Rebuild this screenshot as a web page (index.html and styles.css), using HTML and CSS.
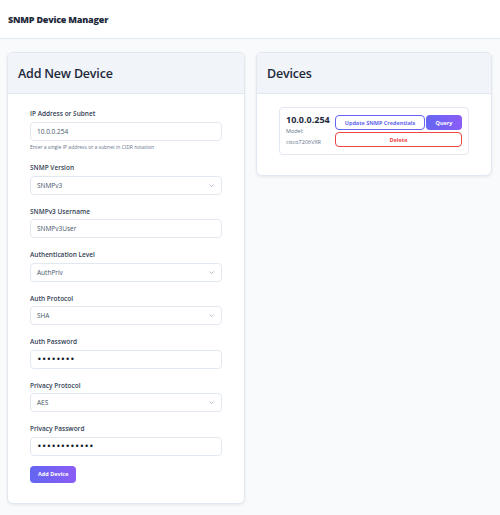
FILE: index.html
```html
<!DOCTYPE html>
<html lang="en">
<head>
<meta charset="utf-8">
<title>SNMP Device Manager</title>
<link rel="stylesheet" href="styles.css">
</head>
<body>
<header class="topbar">
  <h1 class="brand">SNMP Device Manager</h1>
</header>
<main class="layout">
  <section class="card">
    <div class="card-head"><h2 class="card-title">Add New Device</h2></div>
    <form class="card-body form">
      <div class="group">
        <label class="label">IP Address or Subnet</label>
        <input class="field" type="text" value="10.0.0.254">
        <div class="help">Enter a single IP address or a subnet in CIDR notation</div>
      </div>
      <div class="group">
        <label class="label">SNMP Version</label>
        <div class="field select"><span>SNMPv3</span><svg class="chev" viewBox="0 0 10 6" width="5" height="3"><path d="M1 1l4 4 4-4" fill="none" stroke="#94a3b8" stroke-width="1.4"/></svg></div>
      </div>
      <div class="group">
        <label class="label">SNMPv3 Username</label>
        <input class="field" type="text" value="SNMPv3User">
      </div>
      <div class="group">
        <label class="label">Authentication Level</label>
        <div class="field select"><span>AuthPriv</span><svg class="chev" viewBox="0 0 10 6" width="5" height="3"><path d="M1 1l4 4 4-4" fill="none" stroke="#94a3b8" stroke-width="1.4"/></svg></div>
      </div>
      <div class="group">
        <label class="label">Auth Protocol</label>
        <div class="field select"><span>SHA</span><svg class="chev" viewBox="0 0 10 6" width="5" height="3"><path d="M1 1l4 4 4-4" fill="none" stroke="#94a3b8" stroke-width="1.4"/></svg></div>
      </div>
      <div class="group">
        <label class="label">Auth Password</label>
        <div class="field dots">••••••••</div>
      </div>
      <div class="group">
        <label class="label">Privacy Protocol</label>
        <div class="field select"><span>AES</span><svg class="chev" viewBox="0 0 10 6" width="5" height="3"><path d="M1 1l4 4 4-4" fill="none" stroke="#94a3b8" stroke-width="1.4"/></svg></div>
      </div>
      <div class="group last">
        <label class="label">Privacy Password</label>
        <div class="field dots">••••••••••••</div>
      </div>
      <button class="btn-primary" type="button">Add Device</button>
    </form>
  </section>
  <section class="card devices">
    <div class="card-head"><h2 class="card-title">Devices</h2></div>
    <div class="card-body list">
      <div class="device">
        <div class="info">
          <div class="ip">10.0.0.254</div>
          <div class="meta">Model:</div>
          <div class="meta">cisco7206VXR</div>
        </div>
        <div class="actions">
          <button class="btn btn-outline" type="button">Update SNMP Credentials</button>
          <button class="btn btn-fill" type="button">Query</button>
          <button class="btn btn-danger" type="button">Delete</button>
        </div>
      </div>
    </div>
  </section>
</main>
</body>
</html>
```
FILE: styles.css
```css
* { box-sizing: border-box; }
html, body { margin: 0; padding: 0; }
body {
  background: #f8fafc;
  font-family: "Open Sans", "Noto Sans", sans-serif;
  color: #1e293b;
  width: 500px;
  height: 515px;
  overflow: hidden;
}
.topbar {
  height: 39px;
  background: #ffffff;
  border-bottom: 1px solid #e2e8f0;
  display: flex;
  align-items: center;
  padding: 0 8px;
}
.brand {
  margin: 0;
  font-size: 9px;
  font-weight: 800;
  letter-spacing: -0.2px;
  color: #1e293b;
}
.layout {
  display: grid;
  grid-template-columns: 238px 236px;
  column-gap: 11px;
  align-items: start;
  padding: 13px 8px 0 7px;
}
.card {
  background: #ffffff;
  border: 1px solid #e2e8f0;
  border-radius: 6px;
  box-shadow: 0 1px 3px rgba(15, 23, 42, 0.08);
  overflow: hidden;
}
.card-head {
  height: 41px;
  background: #f1f5f9;
  border-bottom: 1px solid #e2e8f0;
  display: flex;
  align-items: center;
  padding: 0 10px;
}
.card-title {
  margin: 0;
  font-size: 12.5px;
  font-weight: 600;
  color: #1e293b;
  letter-spacing: -0.2px;
}
.form { padding: 15px 22px 20px 22px; }
.group { margin-bottom: 12px; }
.group.last { margin-bottom: 10px; }
.label {
  display: block;
  font-size: 6.5px;
  line-height: 9px;
  font-weight: 600;
  color: #334155;
  margin-bottom: 3.5px;
}
.field {
  display: flex;
  align-items: center;
  width: 100%;
  height: 19px;
  border: 1px solid #e2e8f0;
  border-radius: 4px;
  background: #ffffff;
  padding: 0 6px;
  font-family: inherit;
  font-size: 6.5px;
  color: #475569;
  outline: none;
  margin: 0;
}
.select { justify-content: space-between; }
.chev { margin-right: 1px; }
.dots {
  font-size: 8px;
  color: #0f172a;
  letter-spacing: 0px;
  font-family: "DejaVu Sans", sans-serif;
}
.help {
  margin-top: 3.5px;
  font-size: 5px;
  line-height: 7px;
  color: #64748b;
}
.btn-primary {
  display: block;
  height: 17px;
  padding: 0 8px;
  border: none;
  border-radius: 4px;
  background: linear-gradient(90deg, #6366f1, #8b5cf6);
  color: #ffffff;
  font-family: inherit;
  font-size: 5.5px;
  font-weight: 700;
}
.list { padding: 13px 22px 20px 22px; }
.device {
  display: flex;
  justify-content: space-between;
  align-items: center;
  border: 1px solid #e2e8f0;
  border-radius: 4px;
  padding: 6px 6px 6px 6px;
}
.ip {
  font-size: 9px;
  line-height: 12px;
  font-weight: 700;
  color: #1e293b;
}
.meta {
  font-size: 5.5px;
  line-height: 11px;
  color: #64748b;
}
.actions {
  display: grid;
  grid-template-columns: 90px 36px;
  column-gap: 1px;
  row-gap: 2px;
  width: 127px;
}
.btn {
  height: 15px;
  border-radius: 4px;
  font-family: inherit;
  font-size: 5.5px;
  font-weight: 700;
  padding: 0;
  background: #ffffff;
}
.btn-outline { border: 1px solid #6366f1; color: #6366f1; }
.btn-fill {
  border: none;
  color: #ffffff;
  background: linear-gradient(90deg, #6366f1, #8b5cf6);
}
.btn-danger {
  grid-column: 1 / 3;
  border: 1px solid #ef4444;
  color: #ef4444;
}
```
